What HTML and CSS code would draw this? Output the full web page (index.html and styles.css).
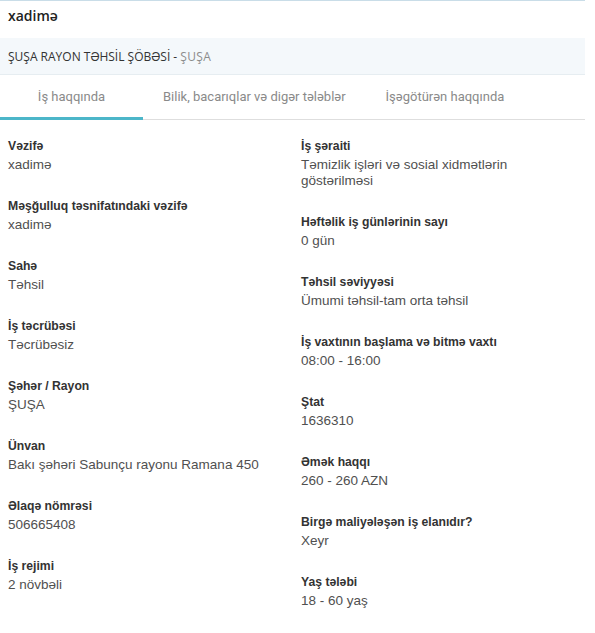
FILE: index.html
```html
<!DOCTYPE html>
<html lang="az">
<head>
    <meta charset="UTF-8">
    <meta name="viewport" content="width=device-width, initial-scale=1.0">
    <title>xadimə</title>
    <link rel="stylesheet" href="styles.css">
</head>
<body>
    <div class="vacancy">
        <div class="vacancy-title">xadimə</div>
        <div class="vacancy-org">ŞUŞA RAYON TƏHSİL ŞÖBƏSİ - <span class="org-city">ŞUŞA</span></div>

        <div class="tabs">
            <div class="tab active">İş haqqında</div>
            <div class="tab">Bilik, bacarıqlar və digər tələblər</div>
            <div class="tab">İşəgötürən haqqında</div>
        </div>

        <div class="details">
            <!-- Left column -->
            <div class="col">
                <div class="field">
                    <div class="label">Vəzifə</div>
                    <div class="value">xadimə</div>
                </div>
                <div class="field">
                    <div class="label">Məşğulluq təsnifatındaki vəzifə</div>
                    <div class="value">xadimə</div>
                </div>
                <div class="field">
                    <div class="label">Sahə</div>
                    <div class="value">Təhsil</div>
                </div>
                <div class="field">
                    <div class="label">İş təcrübəsi</div>
                    <div class="value">Təcrübəsiz</div>
                </div>
                <div class="field">
                    <div class="label">Şəhər / Rayon</div>
                    <div class="value">ŞUŞA</div>
                </div>
                <div class="field">
                    <div class="label">Ünvan</div>
                    <div class="value">Bakı şəhəri Sabunçu rayonu Ramana 450</div>
                </div>
                <div class="field">
                    <div class="label">Əlaqə nömrəsi</div>
                    <div class="value">506665408</div>
                </div>
                <div class="field">
                    <div class="label">İş rejimi</div>
                    <div class="value">2 növbəli</div>
                </div>
            </div>

            <!-- Right column -->
            <div class="col">
                <div class="field">
                    <div class="label">İş şəraiti</div>
                    <div class="value">Təmizlik işləri və sosial xidmətlərin göstərilməsi</div>
                </div>
                <div class="field">
                    <div class="label">Həftəlik iş günlərinin sayı</div>
                    <div class="value">0 gün</div>
                </div>
                <div class="field">
                    <div class="label">Təhsil səviyyəsi</div>
                    <div class="value">Ümumi təhsil-tam orta təhsil</div>
                </div>
                <div class="field">
                    <div class="label">İş vaxtının başlama və bitmə vaxtı</div>
                    <div class="value">08:00 - 16:00</div>
                </div>
                <div class="field">
                    <div class="label">Ştat</div>
                    <div class="value">1636310</div>
                </div>
                <div class="field">
                    <div class="label">Əmək haqqı</div>
                    <div class="value">260 - 260 AZN</div>
                </div>
                <div class="field">
                    <div class="label">Birgə maliyələşən iş elanıdır?</div>
                    <div class="value">Xeyr</div>
                </div>
                <div class="field">
                    <div class="label">Yaş tələbi</div>
                    <div class="value">18 - 60 yaş</div>
                </div>
            </div>
        </div>
    </div>
</body>
</html>
```

FILE: styles.css
```css
body {
    margin: 0;
    background: #fff;
    font-family: "Liberation Sans", Arial, sans-serif;
    color: #333;
}
.vacancy {
    width: 585px;
    border-top: 1px solid #c9dde8;
}
.vacancy-title {
    font-family: "Open Sans", sans-serif;
    font-weight: 600;
    font-size: 14px;
    color: #222;
    height: 37px;
    line-height: 37px;
    padding: 0 8px;
    margin-top: -4px;
    margin-bottom: 4px;
}
.vacancy-org {
    font-family: "Open Sans", sans-serif;
    font-size: 12px;
    color: #333;
    background: #f4f8fb;
    height: 36px;
    line-height: 38px;
    padding: 0 8px;
    border-bottom: 1px solid #e6edf1;
}
.org-city {
    font-size: 12px;
    color: #8c8c8c;
    letter-spacing: 0.3px;
}
.tabs {
    display: flex;
    border-bottom: 1px solid #dedede;
}
.tab {
    font-family: Roboto, sans-serif;
    font-size: 13px;
    color: #8a8a8a;
    height: 42px;
    line-height: 44px;
    padding: 0 20px;
    text-align: center;
    border-bottom: 3px solid transparent;
    margin-bottom: -1px;
}
.tab.active {
    min-width: 103px;
    border-bottom-color: #4cb6c9;
}
.details {
    display: grid;
    grid-template-columns: 293px 250px;
    padding: 17px 8px 0;
}
.field {
    margin-bottom: 24px;
}
.label {
    font-weight: bold;
    font-size: 12.2px;
    line-height: 18px;
    color: #333;
    margin-bottom: 2px;
}
.value {
    font-size: 13.5px;
    line-height: 16px;
    color: #505050;
}
```
